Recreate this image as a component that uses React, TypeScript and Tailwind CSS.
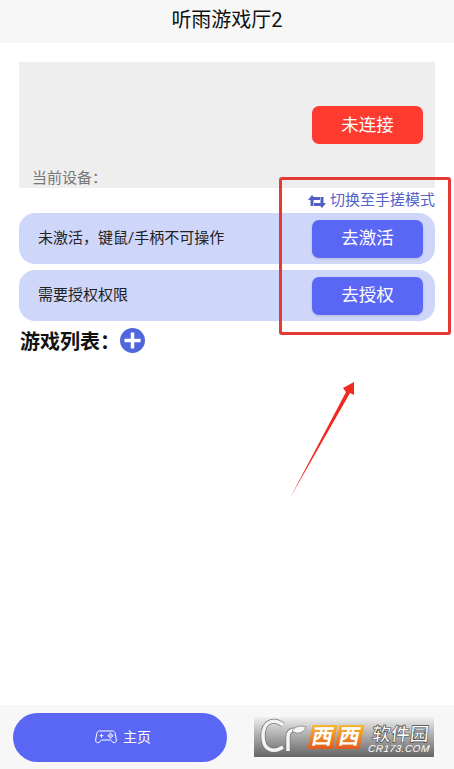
const cjk = "font-['Roboto','Noto_Sans_CJK_SC',sans-serif]";

function SwitchIcon() {
  return (
    <svg width="18" height="15" viewBox="0 0 18 15" fill="none" className="mr-1 mt-[2px]">
      <path d="M4 12V4.5h8" stroke="#4f5fc4" strokeWidth="3" />
      <path d="M0 6 4 1l4 5z" fill="#4f5fc4" />
      <path d="M14 3v7.5H6" stroke="#4f5fc4" strokeWidth="3" />
      <path d="M10 9l4 5 4-5z" fill="#4f5fc4" />
    </svg>
  );
}

function GamepadIcon() {
  return (
    <svg width="22" height="14" viewBox="0 0 22 14" fill="none" stroke="#fff" strokeWidth="1" strokeLinejoin="round">
      <path d="M4.5 1h13c1.5 0 2.3 1 2.7 2.5l1.2 6.5c.3 2-1.8 3.5-3.5 2.3L15.5 10h-9l-2.4 2.3C2.4 13.5.3 12 .6 10l1.2-6.5C2.2 2 3 1 4.5 1z" />
      <path d="M6.5 3.8v3.8M4.6 5.7h3.8" />
      <circle cx="15.5" cy="3.9" r="0.8" />
      <circle cx="15.5" cy="7.5" r="0.8" />
      <circle cx="13.7" cy="5.7" r="0.8" />
      <circle cx="17.3" cy="5.7" r="0.8" />
    </svg>
  );
}

function ActionRow({ label, action }: { label: string; action: string }) {
  return (
    <div className="h-[51px] rounded-[16px] bg-[#ced6f9] flex items-center justify-between pl-[19px] pr-3">
      <span className="text-[15px] text-[#222]">{label}</span>
      <button className="w-[111px] h-[38px] rounded-[7px] bg-[#5a67f5] text-white text-[17.5px] shadow-sm">
        {action}
      </button>
    </div>
  );
}

function Logo() {
  return (
    <div className="w-[180px] h-[40px] bg-gradient-to-b from-[#f0f0f0] via-[#a8a8a8] to-[#666666] flex items-center overflow-hidden">
      <svg width="56" height="40" viewBox="0 0 56 40" fill="none" className="shrink-0">
        <path d="M29 8C20 1 9 4 9 19s11 17 20 11" stroke="#777" strokeWidth="5" />
        <path d="M29 8C20 1 9 4 9 19s11 17 20 11" stroke="#f4f4f4" strokeWidth="3.5" />
        <path d="M34 34V20c0-4 2-7 6-7" stroke="#777" strokeWidth="5" />
        <path d="M34 34V20c0-4 2-7 6-7" stroke="#f4f4f4" strokeWidth="3.5" />
        <path d="M38 14c3-5 9-6 14-4-2 6-9 8-14 4z" fill="#f4f4f4" stroke="#777" strokeWidth="0.7" />
      </svg>
      <div className="flex gap-[2px] -skew-x-12">
        <span className="w-[25px] h-[24px] bg-gradient-to-b from-[#f7b733] to-[#e2581c] text-white text-[21px] leading-[24px] text-center font-bold">
          西
        </span>
        <span className="w-[25px] h-[24px] bg-gradient-to-b from-[#f7b733] to-[#e2581c] text-white text-[21px] leading-[24px] text-center font-bold">
          西
        </span>
      </div>
      <div className="ml-[7px] flex flex-col items-center -skew-x-6 text-white mt-[5px]">
        <span className="text-[19px] leading-[18px] font-bold [-webkit-text-stroke:0.6px_#444]">软件园</span>
        <span className="text-[10px] leading-[10px] italic tracking-[0.5px] font-['Liberation_Sans',sans-serif]">CR173.COM</span>
      </div>
    </div>
  );
}

export default function App() {
  return (
    <div className={`relative w-[454px] h-[769px] bg-white flex flex-col overflow-hidden ${cjk}`}>
      {/* Header */}
      <div className="h-[43px] shrink-0 bg-[#f7f7f7] flex items-center justify-center pb-[3px] text-[20px] text-[#111]">
        听雨游戏厅2
      </div>

      <div className="flex-1 pt-[19px] pl-[19px] pr-[19px] flex flex-col">
        {/* Device panel */}
        <div className="h-[126px] bg-[#eeeeee] flex flex-col justify-end pb-px">
          <div className="flex justify-end pr-3 mb-[25px]">
            <button className="w-[111px] h-[38px] rounded-[7px] bg-[#ff3b30] text-white text-[17.5px]">
              未连接
            </button>
          </div>
          <span className="pl-[13px] text-[15px] leading-[18px] text-[#777]">{"当前设备\uFF1A"}</span>
        </div>

        <div className="h-[25px] flex items-center justify-end text-[15px] text-[#5561c8]">
          <SwitchIcon />
          切换至手搓模式
        </div>

        <div className="flex flex-col gap-[6px]">
          <ActionRow label={"未激活\uFF0C键鼠/手柄不可操作"} action="去激活" />
          <ActionRow label="需要授权权限" action="去授权" />
        </div>

        <div className="mt-[6px] pl-px flex items-center text-[20px] font-bold text-[#111]">
          <span className="w-[100px]">{"游戏列表\uFF1A"}</span>
          <svg width="25" height="25" viewBox="0 0 25 25" className="mb-[3px]">
            <circle cx="12.5" cy="12.5" r="12.5" fill="#4f66dc" />
            <path d="M12.5 4.5v16M4.5 12.5h16" stroke="#fff" strokeWidth="3.5" />
          </svg>
        </div>
      </div>

      {/* Bottom bar */}
      <div className="h-[64px] shrink-0 bg-[#f7f7f7] flex items-center pl-[13px]">
        <button className="w-[214px] h-[49px] rounded-full bg-[#5a67f5] text-white text-[14px] flex items-center justify-center gap-[6px] pl-[6px]">
          <GamepadIcon />
          主页
        </button>
        <div className="ml-[27px]">
          <Logo />
        </div>
      </div>

      {/* Annotation overlay */}
      <div className="absolute left-[279px] top-[177px] w-[172px] h-[158px] border-[3px] border-[#e53935] rounded-[3px]" />
      <svg className="absolute left-[285px] top-[375px]" width="80" height="130" viewBox="0 0 80 130">
        <path d="M5 123 61 17l-3-4 11-6v13l-4-2z" fill="#ee2b1e" />
      </svg>
    </div>
  );
}
